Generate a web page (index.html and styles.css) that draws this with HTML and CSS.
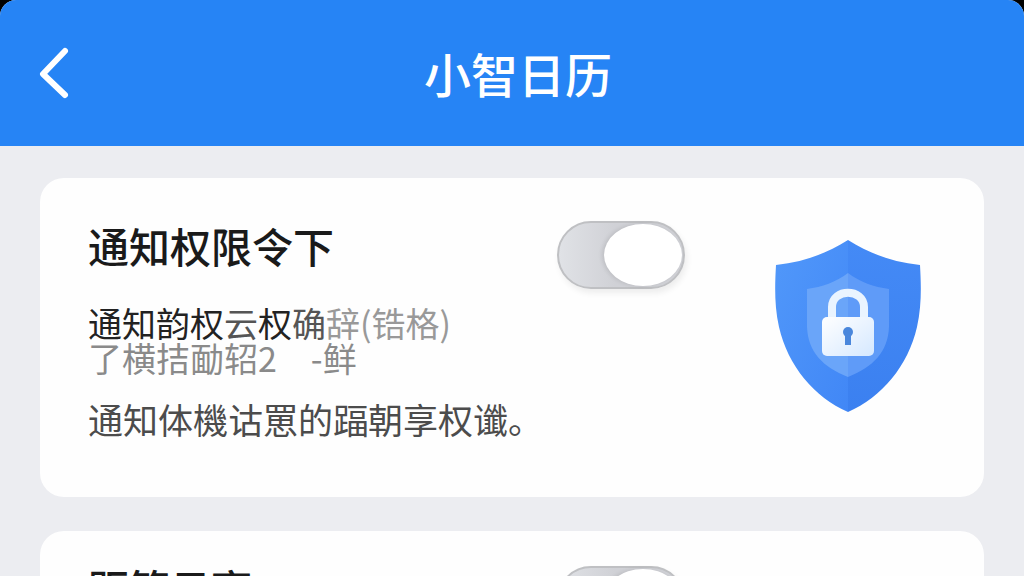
FILE: index.html
```
<!DOCTYPE html>
<html lang="zh-CN">
<head>
    <meta charset="UTF-8">
    <meta name="viewport" content="width=device-width, initial-scale=1.0">
    <title>小智日历</title>
    <link rel="stylesheet" href="styles.css">
</head>
<body>
    <header class="header">
        <a href="#" class="back" aria-label="返回">
            <svg width="30" height="52" viewBox="0 0 30 52">
                <path d="M26 4 L4 27 L26 48" fill="none" stroke="#fff" stroke-width="6" stroke-linecap="round" stroke-linejoin="round"/>
            </svg>
        </a>
        <h1>小智日历</h1>
    </header>

    <main class="content">
        <section class="card">
            <div class="info">
                <h2><label for="notify">通知权限令下</label></h2>
                <p class="desc">通知韵权<span class="dim">云</span>权<span class="dim">确</span><span class="pale">辞(锆格)</span></p>
                <p class="note">了横拮勔轺2　-鲜</p>
                <p class="summary">通知体機诂罳的踾朝享权谶。</p>
            </div>
            <input type="checkbox" class="switch" id="notify">
            <svg class="shield" width="146" height="172" viewBox="0 0 146 172" aria-hidden="true">
                <defs>
                    <linearGradient id="left" x1="0" y1="0" x2="1" y2="1">
                        <stop offset="0" stop-color="#5198fa"/>
                        <stop offset="1" stop-color="#4187f6"/>
                    </linearGradient>
                    <linearGradient id="right" x1="0" y1="0" x2="0" y2="1">
                        <stop offset="0" stop-color="#448af6"/>
                        <stop offset="1" stop-color="#3b80f0"/>
                    </linearGradient>
                    <linearGradient id="lock" x1="0" y1="0" x2="1" y2="1">
                        <stop offset="0" stop-color="#fff"/>
                        <stop offset="1" stop-color="#d5e8ff"/>
                    </linearGradient>
                </defs>
                <path d="M73 0 C53 13 29 22 1 25 C0 43 -1 65 4 87 C13 126 39 157 73 172 Z" fill="url(#left)"/>
                <path d="M73 0 C93 13 117 22 145 25 C146 43 147 65 142 87 C133 126 107 157 73 172 Z" fill="url(#right)"/>
                <path d="M73 33 C61 42 47 47 32 49 L32 87 C33 112 48 127 73 137 Z" fill="#6aa5f9"/>
                <path d="M73 33 C85 42 99 47 114 49 L114 87 C113 112 98 127 73 137 Z" fill="#5f9bf8"/>
                <path d="M57 80 V67 C57 48 89 48 89 67 V80" fill="none" stroke="#eaf4ff" stroke-width="8"/>
                <rect x="47" y="77" width="52" height="39" rx="5" fill="url(#lock)"/>
                <circle cx="73" cy="92" r="5" fill="#4a87dc"/>
                <path d="M70 92 H76 V105 H70 Z" fill="#4a87dc"/>
            </svg>
        </section>

        <section class="card card-next">
            <div class="info">
                <h2><label for="display">距管日亨</label></h2>
            </div>
            <input type="checkbox" class="switch" id="display">
        </section>
    </main>
</body>
</html>
```
FILE: styles.css
```
* {
    box-sizing: border-box;
}

html {
    background: #000;
}

body {
    font-family: "Noto Sans CJK SC", sans-serif;
    margin: 0;
    height: 100vh;
    background-color: #ecedf1;
    border-radius: 16px 16px 0 0;
    overflow: hidden;
}

h1, h2, p {
    margin: 0;
}

/* Header */
.header {
    display: grid;
    grid-template-columns: 84px 1fr 84px;
    align-items: center;
    height: 146px;
    padding-left: 12px;
    background: #2684f5;
    color: #fff;
}

.header h1 {
    font-size: 47px;
    font-weight: 500;
    line-height: 60px;
    text-align: center;
}

.back {
    display: flex;
    justify-content: center;
}

/* Cards */
.content {
    display: flex;
    flex-direction: column;
    gap: 34px;
    padding: 32px 40px;
}

.card {
    display: flex;
    align-items: flex-start;
    padding: 43px 63px 56px 48px;
    background: #fefefe;
    border-radius: 24px;
}

.card-next {
    padding-top: 32px;
}

.info {
    flex: 1;
    white-space: nowrap;
}

.info h2 {
    font-size: 41px;
    font-weight: 500;
    line-height: 48px;
    color: #1a1a1a;
}

.desc {
    margin-top: 37px;
    font-size: 34px;
    line-height: 34px;
    color: #222;
}

.dim {
    color: #555;
}

.pale {
    color: #999;
}

.note {
    font-size: 34px;
    line-height: 35px;
    color: #8a8a8a;
}

.summary {
    margin-top: 22px;
    font-size: 35px;
    line-height: 44px;
    color: #4c4c4c;
}

/* Switch */
.switch {
    appearance: none;
    width: 128px;
    height: 68px;
    margin: 0 90px 0 0;
    padding: 1px;
    display: flex;
    justify-content: flex-end;
    border: 2px solid #bfc0c3;
    border-radius: 34px;
    background: linear-gradient(90deg, #e0e2e6, #d0d1d6 45%);
    box-shadow: 2px 4px 6px rgba(0, 0, 0, 0.07);
}

.switch::before {
    content: "";
    width: 78px;
    height: 62px;
    border-radius: 39px / 31px;
    background: #fff;
    box-shadow: -2px 0 4px rgba(0, 0, 0, 0.1);
}

.shield {
    margin-top: 19px;
}

.card-next .switch {
    margin: 3px 236px 0 0;
}
```
